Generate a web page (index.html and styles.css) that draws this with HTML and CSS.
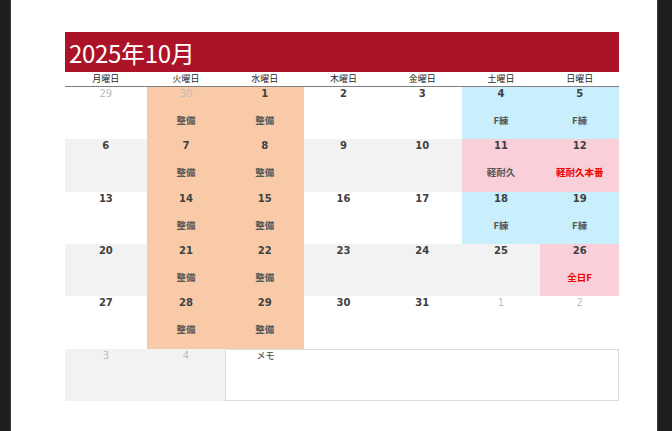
FILE: index.html
```html
<!DOCTYPE html>
<html lang="ja">
<head>
<meta charset="utf-8">
<title>2025年10月</title>
<link rel="stylesheet" href="styles.css">
</head>
<body>
<div class="sheet">
  <div class="calendar">
    <div class="title">2025年10月</div>
    <div class="weekdays">
      <div>月曜日</div><div>火曜日</div><div>水曜日</div><div>木曜日</div><div>金曜日</div><div>土曜日</div><div>日曜日</div>
    </div>
    <div class="grid">
      <div class="cell"><span class="num muted">29</span></div>
      <div class="cell orange"><span class="num muted">30</span><span class="ev">整備</span></div>
      <div class="cell orange"><span class="num">1</span><span class="ev">整備</span></div>
      <div class="cell"><span class="num">2</span></div>
      <div class="cell"><span class="num">3</span></div>
      <div class="cell blue"><span class="num">4</span><span class="ev">F練</span></div>
      <div class="cell blue"><span class="num">5</span><span class="ev">F練</span></div>

      <div class="cell alt"><span class="num">6</span></div>
      <div class="cell orange"><span class="num">7</span><span class="ev">整備</span></div>
      <div class="cell orange"><span class="num">8</span><span class="ev">整備</span></div>
      <div class="cell alt"><span class="num">9</span></div>
      <div class="cell alt"><span class="num">10</span></div>
      <div class="cell pink"><span class="num">11</span><span class="ev">軽耐久</span></div>
      <div class="cell pink"><span class="num">12</span><span class="ev red">軽耐久本番</span></div>

      <div class="cell"><span class="num">13</span></div>
      <div class="cell orange"><span class="num">14</span><span class="ev">整備</span></div>
      <div class="cell orange"><span class="num">15</span><span class="ev">整備</span></div>
      <div class="cell"><span class="num">16</span></div>
      <div class="cell"><span class="num">17</span></div>
      <div class="cell blue"><span class="num">18</span><span class="ev">F練</span></div>
      <div class="cell blue"><span class="num">19</span><span class="ev">F練</span></div>

      <div class="cell alt"><span class="num">20</span></div>
      <div class="cell orange"><span class="num">21</span><span class="ev">整備</span></div>
      <div class="cell orange"><span class="num">22</span><span class="ev">整備</span></div>
      <div class="cell alt"><span class="num">23</span></div>
      <div class="cell alt"><span class="num">24</span></div>
      <div class="cell alt"><span class="num">25</span></div>
      <div class="cell pink"><span class="num">26</span><span class="ev red">全日F</span></div>

      <div class="cell"><span class="num">27</span></div>
      <div class="cell orange"><span class="num">28</span><span class="ev">整備</span></div>
      <div class="cell orange"><span class="num">29</span><span class="ev">整備</span></div>
      <div class="cell"><span class="num">30</span></div>
      <div class="cell"><span class="num">31</span></div>
      <div class="cell"><span class="num muted">1</span></div>
      <div class="cell"><span class="num muted">2</span></div>

      <div class="cell alt"><span class="num muted">3</span></div>
      <div class="cell alt"><span class="num muted">4</span></div>
      <div class="memo"><span class="memo-label">メモ</span></div>
    </div>
  </div>
</div>
</body>
</html>
```
FILE: styles.css
```css
html, body {
  margin: 0;
  padding: 0;
}
body {
  background: #1e1e1e;
  height: 431px;
  overflow: hidden;
  font-family: "DejaVu Sans", "Noto Sans CJK JP", sans-serif;
}
.sheet {
  margin-left: 10px;
  width: 648px;
  height: 431px;
  background: #ffffff;
  border-left: 1px solid #3c3c3c;
  border-right: 1px solid #3c3c3c;
  padding: 32px 0 0 54px;
  box-sizing: border-box;
}
.calendar {
  width: 554px;
}
.title {
  height: 40px;
  background: #ac1329;
  color: #ffffff;
  font-family: "Noto Sans CJK JP", sans-serif;
  font-size: 24px;
  display: flex;
  align-items: center;
  padding-left: 4px;
  letter-spacing: -0.3px;
}
.weekdays {
  display: grid;
  grid-template-columns: 81.7px repeat(6, 1fr);
  height: 14px;
  border-bottom: 1px solid #7f7f7f;
  font-family: "Noto Sans CJK JP", sans-serif;
  font-size: 9px;
  line-height: 14px;
  color: #262626;
  text-align: center;
}
.grid {
  display: grid;
  grid-template-columns: 81.7px repeat(6, 1fr);
  grid-template-rows: repeat(6, 52.33px);
}
.cell {
  display: flex;
  flex-direction: column;
  align-items: center;
  background: #ffffff;
}
.cell.alt { background: #f2f2f2; }
.cell.orange { background: #f9caa7; }
.cell.blue { background: #c9eefc; }
.cell.pink { background: #f9cfd9; }
.num {
  font-size: 10px;
  font-weight: bold;
  line-height: 14px;
  color: #404040;
}
.num.muted {
  font-weight: normal;
  color: #bdbdbd;
}
.ev {
  margin-top: 12px;
  font-family: "Noto Sans CJK JP", sans-serif;
  font-size: 9.5px;
  font-weight: bold;
  line-height: 14px;
  color: #595959;
}
.ev.red {
  color: #ee0000;
}
.memo {
  grid-column: 3 / span 5;
  border: 1px solid #dcdcdc;
  background: #ffffff;
  display: flex;
  align-items: flex-start;
}
.memo-label {
  width: 20%;
  text-align: center;
  font-family: "Noto Sans CJK JP", sans-serif;
  font-size: 9px;
  line-height: 12px;
  color: #404040;
}
```
